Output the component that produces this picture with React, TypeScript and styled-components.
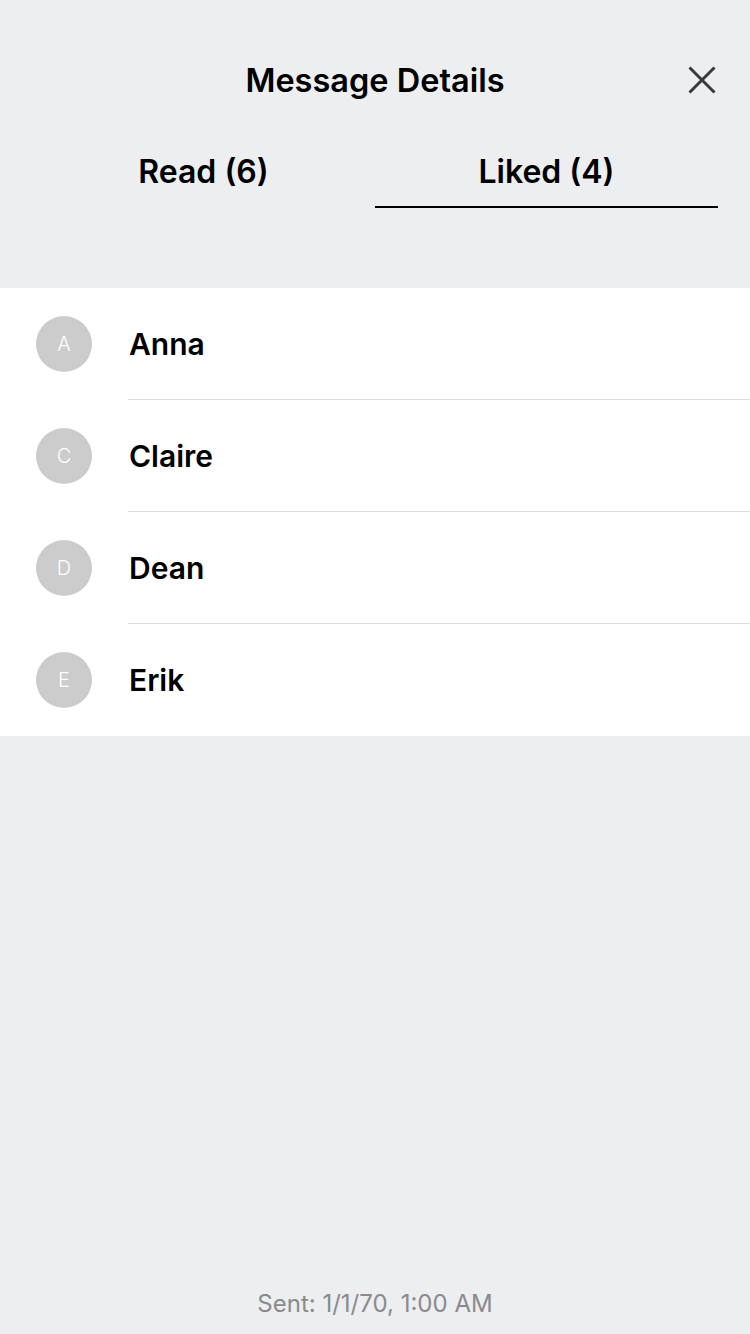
import React from "react";
import styled, { createGlobalStyle } from "styled-components";

const Global = createGlobalStyle`
  html, body { margin: 0; padding: 0; background: #edeef0; }
  body { font-family: Inter, "Noto Sans", sans-serif; -webkit-font-smoothing: antialiased; }
  * { box-sizing: border-box; }
`;

const Page = styled.div`
  min-height: 1334px;
  display: flex;
  flex-direction: column;
  background: #edeef0;
`;

const HeaderBar = styled.div`
  height: 160px;
  display: flex;
  align-items: center;
  justify-content: center;
  position: relative;
`;

const Title = styled.h1`
  margin: 0;
  font-size: 32.5px;
  font-weight: 600;
  color: #000;
`;

const CloseButton = styled.button`
  position: absolute;
  right: 26px;
  top: 50%;
  transform: translateY(-50%);
  width: 44px;
  height: 44px;
  border: 0;
  background: transparent;
  padding: 0;
  display: flex;
  align-items: center;
  justify-content: center;
`;

const Tabs = styled.div`
  display: grid;
  grid-template-columns: 1fr 1fr;
  padding: 0 32px;
  margin-top: -8px;
`;

const Tab = styled.div<{ $active?: boolean }>`
  height: 56px;
  display: flex;
  align-items: flex-start;
  justify-content: center;
  font-size: 32px;
  font-weight: 600;
  color: #000;
  border-bottom: 2px solid ${(p) => (p.$active ? "#000" : "transparent")};
  line-height: 40px;
`;

const List = styled.div`
  margin-top: 80px;
  background: #fff;
`;

const Row = styled.div`
  display: flex;
  align-items: center;
  height: 112px;
  padding-left: 36px;
`;

const Avatar = styled.div`
  width: 56px;
  height: 56px;
  border-radius: 50%;
  background: #cccccc;
  color: #fff;
  display: flex;
  align-items: center;
  justify-content: center;
  font-size: 20px;
  font-weight: 300;
  flex-shrink: 0;
`;

const NameCell = styled.div<{ $last?: boolean }>`
  flex: 1;
  height: 100%;
  margin-left: 36px;
  padding-left: 1px;
  display: flex;
  align-items: center;
  border-bottom: 1px solid ${(p) => (p.$last ? "transparent" : "#dcdcdf")};
  font-size: 30px;
  font-weight: 600;
  color: #000;
`;

const Spacer = styled.div`
  flex: 1;
`;

const Footer = styled.div`
  text-align: center;
  font-size: 24px;
  color: #8a8a8e;
  padding-bottom: 16px;
  line-height: 28px;
`;

const people = ["Anna", "Claire", "Dean", "Erik"];

export default function App() {
  return (
    <>
      <Global />
      <Page>
        <HeaderBar>
          <Title>Message Details</Title>
          <CloseButton aria-label="Close">
            <svg width="28" height="28" viewBox="0 0 28 28">
              <path d="M1.5 1.5 L26.5 26.5 M26.5 1.5 L1.5 26.5" stroke="#3a3a3c" strokeWidth="3" />
            </svg>
          </CloseButton>
        </HeaderBar>
        <Tabs>
          <Tab>Read (6)</Tab>
          <Tab $active>Liked (4)</Tab>
        </Tabs>
        <List>
          {people.map((n, i) => (
            <Row key={n}>
              <Avatar>{n[0]}</Avatar>
              <NameCell $last={i === people.length - 1}>{n}</NameCell>
            </Row>
          ))}
        </List>
        <Spacer />
        <Footer>Sent: 1/1/70, 1:00 AM</Footer>
      </Page>
    </>
  );
}
